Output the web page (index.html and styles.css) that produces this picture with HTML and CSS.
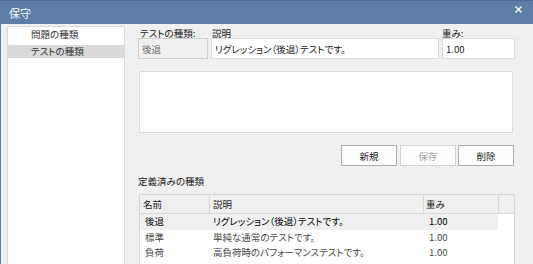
FILE: index.html
```html
<!DOCTYPE html>
<html lang="ja">
<head>
  <meta charset="UTF-8">
  <title>保守</title>
  <link rel="stylesheet" href="styles.css">
</head>
<body>

  <div class="window">
    <div class="titlebar">
      <span class="title">保守</span>
      <svg class="close" width="7" height="7" viewBox="0 0 7 7">
        <path d="M0.5 0.5 L6.5 6.5 M6.5 0.5 L0.5 6.5" stroke="#fff" stroke-width="1.4" fill="none"/>
      </svg>
    </div>

    <div class="content">
      <ul class="category-list">
        <li>問題の種類</li>
        <li class="selected">テストの種類</li>
      </ul>

      <div class="panel">
        <div class="fields">
          <span class="field-label">テストの種類:</span>
          <span class="field-label">説明</span>
          <span class="field-label">重み:</span>
          <input class="field code-field" type="text" value="後退" disabled>
          <input class="field" type="text" value="リグレッション（後退）テストです。">
          <input class="field" type="text" value="1.00">
        </div>

        <textarea class="notes"></textarea>

        <div class="buttons">
          <button class="btn">新規</button>
          <button class="btn" disabled>保存</button>
          <button class="btn">削除</button>
        </div>

        <div class="section-label">定義済みの種類</div>

        <div class="types">
          <div class="types-head">
            <span>名前</span>
            <span>説明</span>
            <span>重み</span>
            <span></span>
          </div>
          <div class="types-row selected">
            <span>後退</span>
            <span>リグレッション（後退）テストです。</span>
            <span>1.00</span>
          </div>
          <div class="types-row">
            <span>標準</span>
            <span>単純な通常のテストです。</span>
            <span>1.00</span>
          </div>
          <div class="types-row">
            <span>負荷</span>
            <span>高負荷時のパフォーマンステストです。</span>
            <span>1.00</span>
          </div>
        </div>
      </div>
    </div>
  </div>

</body>
</html>
```

FILE: styles.css
```css
html, body {
  margin: 0;
  padding: 0;
  overflow: hidden;
  background-color: #f0f0f0;
  font-family: "Noto Sans CJK JP", "Noto Sans", sans-serif;
  font-size: 9.5px;
  font-feature-settings: "palt";
  color: #1a1a1a;
}
.window {
  width: 533px;
  height: 264px;
  display: flex;
  flex-direction: column;
}
.titlebar {
  height: 24px;
  flex: none;
  display: flex;
  align-items: flex-start;
  justify-content: space-between;
  background-color: #5a7ea6;
  box-sizing: border-box;
  border-top: 1px solid #4b6d93;
}
.title {
  margin: 5px 0 0 9px;
  font-size: 11px;
  line-height: 15px;
  color: #fff;
}
.close {
  margin: 5px 11px 0 0;
}
.content {
  flex: 1;
  display: flex;
  border-left: 1px solid #5a7ea6;
  min-height: 0;
}
.category-list {
  list-style: none;
  margin: 2px 0 0 6px;
  padding: 1px 0 0 0;
  width: 118px;
  box-sizing: border-box;
  border: 1px solid #dadada;
  border-bottom: none;
  background-color: #fff;
  display: flex;
  flex-direction: column;
  gap: 4px;
}
.category-list li {
  height: 13px;
  line-height: 13px;
  padding-left: 23px;
  color: #333;
}
.category-list li.selected {
  background-color: #d9d9d9;
}
.panel {
  flex: 1;
  padding: 5px 18px 0 13px;
  display: flex;
  flex-direction: column;
}
.fields {
  display: grid;
  grid-template-columns: 70px 228px 73px;
  column-gap: 3px;
}
.field-label {
  line-height: 9px;
  height: 9px;
  padding-left: 2px;
}
.field-label:nth-child(2) {
  padding-left: 1px;
}
.field-label:nth-child(3) {
  padding-left: 0;
}
.field {
  height: 21px;
  box-sizing: border-box;
  margin: 0;
  padding: 0 3px;
  border: 1px solid #dcdcdc;
  background-color: #fff;
  font: inherit;
  color: #1a1a1a;
  outline: none;
}
.code-field {
  background-color: #f0f0f0;
  border-color: #cfcfcf;
  color: #6d6d6d;
}
.notes {
  display: block;
  margin: 12px 0 0 1px;
  width: 374px;
  height: 62px;
  box-sizing: border-box;
  border: 1px solid #dcdcdc;
  background-color: #fff;
  resize: none;
  padding: 0;
}
.buttons {
  display: flex;
  justify-content: flex-end;
  margin: 12px 0 0 0;
  padding-right: 1px;
}
.btn {
  width: 56px;
  height: 21px;
  margin: 0 0 0 2px;
  padding: 0;
  box-sizing: border-box;
  border: 1px solid #adadad;
  background-color: #fdfdfd;
  font: inherit;
  color: #1a1a1a;
}
.btn:first-child {
  margin-left: 0;
}
.btn + .btn {
  margin-left: 3px;
}
.btn:last-child {
  margin-left: 2px;
}
.btn:disabled {
  border-color: #d2d2d2;
  color: #a3a3a3;
}
.section-label {
  margin: 9px 0 7px 0;
  line-height: 12px;
}
.types {
  flex: 1;
  margin-left: 1px;
  width: 376px;
  box-sizing: border-box;
  border: 1px solid #d5d5d5;
  border-bottom: none;
  background-color: #fff;
}
.types-head {
  display: grid;
  grid-template-columns: 70px 214px 75px 1fr;
  height: 19px;
  box-sizing: border-box;
  border-bottom: 1px solid #d9d9d9;
  background-color: #f0f0f0;
}
.types-head span {
  line-height: 18px;
  padding-left: 3px;
  box-sizing: border-box;
  border-right: 1px solid #d9d9d9;
}
.types-head span:nth-child(3) {
  padding-left: 2px;
}
.types-head span:last-child {
  border-right: none;
}
.types-row {
  display: grid;
  grid-template-columns: 70px 214px 74px;
  width: 358px;
  height: 15.5px;
  line-height: 15.5px;
  color: #4a4a4a;
}
.types-row span {
  padding-left: 3px;
  white-space: nowrap;
}
.types-row span:first-child,
.types-row span:nth-child(3) {
  padding-left: 5px;
}
.types-row.selected {
  background-color: #f0f0f0;
  color: #000;
}
```
